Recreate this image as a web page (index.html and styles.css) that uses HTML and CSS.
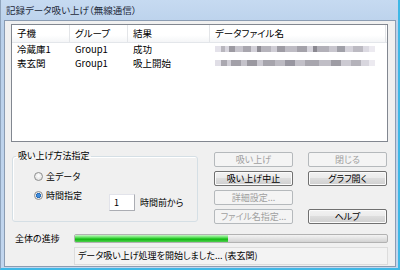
FILE: index.html
```html
<!DOCTYPE html>
<html lang="ja">
<head>
    <meta charset="UTF-8">
    <meta name="viewport" content="width=device-width, initial-scale=1.0">
    <title>記録データ吸い上げ（無線通信）</title>
    <link rel="stylesheet" href="styles.css">
</head>
<body>
    <div class="window">
        <div class="titlebar">記録データ吸い上げ（無線通信）</div>
        <div class="client">
            <div class="listview">
                <div class="lv-head">
                    <div class="col c1">子機</div>
                    <div class="col c2">グループ</div>
                    <div class="col c3">結果</div>
                    <div class="col c4">データファイル名</div>
                </div>
                <div class="lv-row">
                    <div class="col c1">冷蔵庫1</div>
                    <div class="col c2">Group1</div>
                    <div class="col c3">成功</div>
                    <div class="col c4"><span class="blur"></span></div>
                </div>
                <div class="lv-row">
                    <div class="col c1">表玄関</div>
                    <div class="col c2">Group1</div>
                    <div class="col c3">吸上開始</div>
                    <div class="col c4"><span class="blur blur-b"></span></div>
                </div>
            </div>

            <div class="middle">
                <fieldset class="group">
                    <legend>吸い上げ方法指定</legend>
                    <div class="radio-row">
                        <span class="radio"></span>
                        <span>全データ</span>
                    </div>
                    <div class="radio-row second">
                        <div class="radio-label">
                            <span class="radio checked"></span>
                            <span>時間指定</span>
                        </div>
                        <div class="hours">
                            <span class="textbox">1</span>
                            <span>時間前から</span>
                        </div>
                    </div>
                </fieldset>

                <div class="buttons">
                    <button type="button" class="btn" disabled>吸い上げ</button>
                    <button type="button" class="btn" disabled>閉じる</button>
                    <button type="button" class="btn">吸い上げ中止</button>
                    <button type="button" class="btn">グラフ開く</button>
                    <button type="button" class="btn" disabled>詳細設定...</button>
                    <span></span>
                    <button type="button" class="btn" disabled>ファイル名指定...</button>
                    <button type="button" class="btn">ヘルプ</button>
                </div>
            </div>

            <div class="progress-row">
                <span class="progress-label">全体の進捗</span>
                <div class="progress"><div class="progress-fill" style="width: 49%;"></div></div>
            </div>
            <div class="status">データ吸い上げ処理を開始しました... (表玄関)</div>
        </div>
    </div>
</body>
</html>
```

FILE: styles.css
```css
* { box-sizing: border-box; }

body {
    margin: 0;
    font-family: "Noto Sans CJK JP", "Noto Sans", sans-serif;
    font-feature-settings: "palt";
    font-size: 9px;
    color: #000;
    background: #fff;
}

.window {
    width: 400px;
    height: 270px;
    display: flex;
    flex-direction: column;
    background: linear-gradient(#c6daf1, #b9d0ea 30px, #c2d6ee);
    border-right: 2px solid #3fb8e6;
    border-bottom: 2px solid #3fb8e6;
    border-left: 1px solid #8fa4bd;
}

.titlebar {
    height: 20px;
    padding: 3px 0 0 5px;
    font-size: 9.5px;
    line-height: 14px;
    color: #1e2a3a;
}

.client {
    flex: 1;
    margin: 0 2px 1px 3px;
    border: 1px solid #8b9cb2;
    background: #f0f0f0;
    padding: 3px 7px 0 6px;
    display: flex;
    flex-direction: column;
}

/* list view */
.listview {
    height: 118px;
    border: 1px solid #828790;
    background: #fff;
    font-size: 9.5px;
}

.lv-head {
    display: flex;
    height: 18px;
    margin-bottom: -1px;
    background: linear-gradient(#fff, #fff 60%, #f4f5f7);
    border-bottom: 1px solid #e3e6ea;
}

.lv-head .col {
    line-height: 17px;
    border-right: 1px solid #e3e5e8;
}

.lv-head .c4 { flex: 0 0 176px; }

.lv-row {
    display: flex;
    height: 14px;
    line-height: 14px;
}

.col {
    padding-left: 5px;
    white-space: nowrap;
    overflow: hidden;
}

.c1 { width: 58px; }
.c2 { width: 58px; }
.c3 { width: 82px; }
.c4 { flex: 1; }

.blur {
    display: inline-block;
    width: 160px;
    height: 6px;
    margin-top: 4px;
    vertical-align: top;
    background: linear-gradient(90deg,
        #e4e2ea 0 6px, #b8b6bd 6px 10px, #d8d6de 10px 14px, #9c9aa2 14px 20px,
        #c6c4cc 20px 28px, #a8a6ae 28px 36px, #d2d0d8 36px 42px, #8e8c94 42px 46px,
        #b6b4bc 46px 56px, #cfcdd5 56px 62px, #9e9ca4 62px 70px, #bebcc4 70px 82px,
        #a4a2aa 82px 92px, #d6d4dc 92px 98px, #8a8890 98px 102px, #b2b0b8 102px 114px,
        #c8c6ce 114px 122px, #a0a0a8 122px 130px, #d4d2da 130px 138px, #bcbac2 138px 148px,
        #dcdae2 148px 154px, #eceaf0 154px 160px);
}

.blur-b {
    background: linear-gradient(90deg,
        #e0dee6 0 6px, #aaa8b0 6px 12px, #d0ced6 12px 16px, #a2a0a8 16px 26px,
        #c4c2ca 26px 32px, #9a98a0 32px 42px, #cac8d0 42px 48px, #a6a4ac 48px 60px,
        #bcbac2 60px 70px, #9896a0 70px 80px, #c2c0c8 80px 90px, #a8a6ae 90px 104px,
        #c0bec6 104px 116px, #9e9ca4 116px 126px, #cccad2 126px 136px, #b4b2ba 136px 146px,
        #d8d6de 146px 154px, #eceaf0 154px 160px);
}

/* option group + buttons */
.middle {
    display: flex;
    margin-top: 8px;
    height: 72px;
}

.group {
    margin: 0 0 0 1px;
    width: 186px;
    border: 1px solid #d5dfe5;
    border-radius: 3px;
    padding: 1px 0 0 21px;
    box-shadow: inset 1px 1px 0 #fff;
}

.group legend {
    padding: 0 2px;
    margin-left: -18px;
    line-height: 12px;
}

.radio-row {
    display: flex;
    align-items: center;
    gap: 3px;
    height: 14px;
    margin-top: 6px;
}

.radio-row.second {
    align-items: flex-start;
    margin-top: 5px;
}

.radio-label {
    display: flex;
    align-items: center;
    gap: 3px;
    width: 72px;
    height: 14px;
}

.radio {
    width: 9px;
    height: 9px;
    border-radius: 50%;
    border: 1px solid #8e8f8f;
    background: radial-gradient(circle at 50% 40%, #fff, #d8d8d8);
}

.radio.checked {
    background: radial-gradient(circle, #3f8bd8 0 1.6px, #1d5fae 2.4px, #e8e8e8 2.8px, #f8f8f8);
}

.hours {
    display: flex;
    align-items: center;
    gap: 5px;
    margin-top: 6px;
}

.textbox {
    width: 26px;
    height: 17px;
    line-height: 15px;
    padding-left: 4px;
    background: #fff;
    border: 1px solid #abadb3;
    border-top-color: #e2e3ea;
    border-left-color: #e2e3ea;
}

.buttons {
    display: grid;
    grid-template-columns: 79px 79px;
    grid-auto-rows: 15px;
    column-gap: 15px;
    row-gap: 4px;
    margin: 2px 0 0 16px;
}

.btn {
    font: inherit;
    font-size: 9px;
    line-height: 13px;
    padding: 0;
    border: 1px solid #707070;
    border-radius: 2px;
    color: #000;
    background: linear-gradient(#f2f2f2, #ebebeb 45%, #dddddd 50%, #cfcfcf);
    box-shadow: inset 0 0 0 1px #fbfbfb;
}

.btn:disabled {
    color: #a0a0a0;
    border-color: #b5b9bc;
    background: #f4f4f4;
    box-shadow: none;
}

/* progress + status */
.progress-row {
    display: flex;
    align-items: center;
    margin-top: 11px;
    height: 10px;
}

.progress-label {
    width: 63px;
    padding-left: 4px;
}

.progress {
    width: 314px;
    height: 9px;
    border: 1px solid #b2b2b2;
    border-radius: 2px;
    background: linear-gradient(#f3f3f3, #e3e3e3 50%, #d2d2d2);
    overflow: hidden;
}

.progress-fill {
    height: 100%;
    background: linear-gradient(#c8f6c8, #5ee05e 35%, #12b812 60%, #4fcf4f);
}

.status {
    margin: 4px 0 0 63px;
    width: 314px;
    height: 18px;
    line-height: 16px;
    padding-left: 3px;
    border: 1px solid #dcdcdc;
    background: #f3f3f3;
}
```
